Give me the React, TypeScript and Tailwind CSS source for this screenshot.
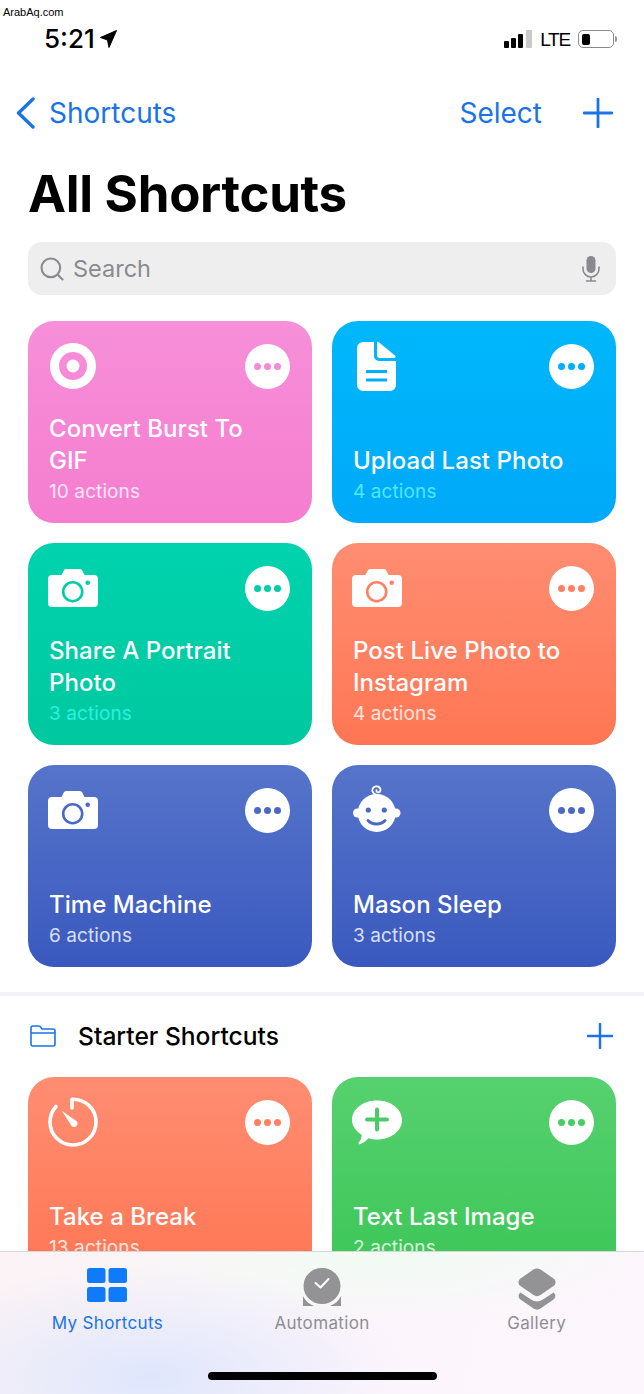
import { Search } from "lucide-react";
import { ReactNode } from "react";

function TargetIcon() {
  return (
    <svg width="50" height="50" viewBox="0 0 50 50" fill="none">
      <circle cx="25" cy="25" r="18.500" stroke="white" strokeWidth="9" />
      <circle cx="25" cy="25" r="6.500" fill="white" />
    </svg>
  );
}

function DocIcon({ accent }: { accent: string }) {
  return (
    <svg width="50" height="50" viewBox="0 0 50 50" fill="none">
      <path d="M11 1h11v14a5 5 0 0 0 5 5h17v24a6 6 0 0 1-6 6H11a6 6 0 0 1-6-6V7a6 6 0 0 1 6-6z" fill="white" />
      <path d="M25 0.500c0.500 0 1 0.200 1.500 0.600L43 14.500c1 0.900 0.500 2.500-0.800 2.500H28a3 3 0 0 1-3-3z" fill="white" />
      <path d="M14 30.500h21M14 39h21" stroke={accent} strokeWidth="3" />
    </svg>
  );
}

function CameraIcon({ accent }: { accent: string }) {
  return (
    <svg width="50" height="50" viewBox="0 0 50 50" fill="none">
      <path d="M4 12h9.500l2-4c.5-1.200 1.500-2 3-2h13c1.500 0 2.500.8 3 2l2 4H46a4 4 0 0 1 4 4v24a4 4 0 0 1-4 4H4a4 4 0 0 1-4-4V16a4 4 0 0 1 4-4z" fill="white" />
      <circle cx="24.700" cy="28.700" r="9.500" stroke={accent} strokeWidth="2.600" />
      <circle cx="39.700" cy="19.700" r="2.300" fill={accent} />
    </svg>
  );
}

function BabyIcon({ accent }: { accent: string }) {
  return (
    <svg width="50" height="50" viewBox="0 0 50 50" fill="none">
      <circle cx="24.700" cy="28" r="19" fill="white" />
      <circle cx="5.500" cy="28" r="4.500" fill="white" />
      <circle cx="44" cy="28" r="4.500" fill="white" />
      <path d="M25 10c-3.500-1-5.500-3.500-4.500-6 1-2.800 5-3.500 7-1.500 1.800 1.800 1 4.500-1 4.800-1.500.2-2.500-1-2-2.200" stroke="white" strokeWidth="1.800" strokeLinecap="round" />
      <circle cx="16.300" cy="25" r="2.600" fill={accent} />
      <circle cx="32.300" cy="25" r="2.600" fill={accent} />
      <path d="M16 35.500c4 4.500 13 4.500 17 0" stroke={accent} strokeWidth="3" strokeLinecap="round" />
    </svg>
  );
}

function TimerIcon() {
  return (
    <svg width="50" height="50" viewBox="0 0 50 50" fill="none">
      <path d="M24 11V2.200C37 1.800 48 11.500 48 25c0 12.700-10.300 23-23 23S2 37.700 2 25c0-6 2.300-11.400 6-15.500" stroke="white" strokeWidth="3.600" strokeLinecap="round" strokeLinejoin="round" />
      <path d="M13.500 13.500l13.800 9.800a3.500 3.500 0 1 1-4.500 4.500z" fill="white" />
    </svg>
  );
}

function MessagePlusIcon({ accent }: { accent: string }) {
  return (
    <svg width="50" height="50" viewBox="0 -2.500 50 50" fill="none" className="overflow-visible">
      <path d="M25 1c14 0 25 8.500 25 19.500S39 40 25 40c-3 0-6-.4-8.500-1.200C14 41.500 11 44 8 44.800c-1.500.3-2-.8-1.200-1.800 1.500-1.900 2.800-4.500 3-7.500C4.200 32 0 26.500 0 20.500 0 9.500 11 1 25 1z" fill="white" />
      <path d="M25 10v20M15 20h20" stroke={accent} strokeWidth="4" strokeLinecap="round" />
    </svg>
  );
}

function PlusIcon({ size, className }: { size: number; className?: string }) {
  return (
    <svg className={className} width={size} height={size} viewBox="0 0 30 30" fill="none" stroke="#1a73e8" strokeWidth="2.800" strokeLinecap="round">
      <path d="M15 1v28M1 15h28" />
    </svg>
  );
}

type Card = {
  title: string[];
  count: string;
  gradient: string;
  accent: string;
  countClass: string;
  icon: (accent: string) => ReactNode;
};

const PINK = "bg-gradient-to-b from-[#f78fd9] to-[#f57dcf]";
const BLUE = "bg-gradient-to-b from-[#00b7fb] to-[#00a9f9]";
const TEAL = "bg-gradient-to-b from-[#00d3ae] to-[#00c89f]";
const CORAL = "bg-gradient-to-b from-[#ff8d72] to-[#ff7653]";
const INDIGO = "bg-gradient-to-b from-[#5674ca] to-[#3a59bf]";
const GREEN = "bg-gradient-to-b from-[#56d16f] to-[#3bc657]";

const mainCards: Card[] = [
  { title: ["Convert Burst To", "GIF"], count: "10 actions", gradient: PINK, accent: "#f78ad7", countClass: "text-white/80", icon: () => <TargetIcon /> },
  { title: ["Upload Last Photo"], count: "4 actions", gradient: BLUE, accent: "#00aff9", countClass: "text-[#4fe8ff]", icon: (a) => <DocIcon accent={a} /> },
  { title: ["Share A Portrait", "Photo"], count: "3 actions", gradient: TEAL, accent: "#00cea6", countClass: "text-[#2cf0e0]", icon: (a) => <CameraIcon accent={a} /> },
  { title: ["Post Live Photo to", "Instagram"], count: "4 actions", gradient: CORAL, accent: "#ff8163", countClass: "text-white/80", icon: (a) => <CameraIcon accent={a} /> },
  { title: ["Time Machine"], count: "6 actions", gradient: INDIGO, accent: "#4a68c6", countClass: "text-white/80", icon: (a) => <CameraIcon accent={a} /> },
  { title: ["Mason Sleep"], count: "3 actions", gradient: INDIGO, accent: "#4a68c6", countClass: "text-white/80", icon: (a) => <BabyIcon accent={a} /> },
];

const starterCards: Card[] = [
  { title: ["Take a Break"], count: "13 actions", gradient: CORAL, accent: "#ff8163", countClass: "text-white/80", icon: () => <TimerIcon /> },
  { title: ["Text Last Image"], count: "2 actions", gradient: GREEN, accent: "#49cc63", countClass: "text-white/80", icon: (a) => <MessagePlusIcon accent={a} /> },
];

function ShortcutCard({ card }: { card: Card }) {
  return (
    <div className={`h-[202px] rounded-[26px] flex flex-col ${card.gradient}`}>
      <div className="flex items-center justify-between pt-5 pl-5 pr-[22px]">
        {card.icon(card.accent)}
        <div className="w-[45px] h-[45px] rounded-full bg-white flex items-center justify-center gap-[3px]">
          <span className="w-[7px] h-[7px] rounded-full" style={{ backgroundColor: card.accent }} />
          <span className="w-[7px] h-[7px] rounded-full" style={{ backgroundColor: card.accent }} />
          <span className="w-[7px] h-[7px] rounded-full" style={{ backgroundColor: card.accent }} />
        </div>
      </div>
      <div className="mt-auto pl-[21px] pb-[19px]">
        {card.title.map((line) => (
          <div key={line} className="text-[24px] leading-[32px] font-medium tracking-[0.05px] text-white">
            {line}
          </div>
        ))}
        <div className={`mt-[3px] text-[19px] leading-[24px] tracking-[0.1px] ${card.countClass}`}>{card.count}</div>
      </div>
    </div>
  );
}

function StatusBar() {
  return (
    <div className="h-[78px] flex items-center pl-11 pr-[27px] text-black">
      <span className="text-[26px] font-medium leading-none">5:21</span>
      <svg className="ml-[5px]" width="17" height="18" viewBox="0 0 17 18">
        <path d="M16.500 0.500L0.500 7.500l7 2.500 1.500 7.500z" fill="black" stroke="black" strokeWidth="1" strokeLinejoin="round" />
      </svg>
      <div className="ml-auto flex items-center">
        <svg width="28" height="18" viewBox="0 0 28 18">
          <rect x="0" y="11" width="5" height="7" rx="1" fill="black" />
          <rect x="7" y="8" width="5" height="10" rx="1" fill="black" />
          <rect x="14" y="4" width="5" height="14" rx="1" fill="black" />
          <rect x="22" y="0" width="6" height="18" rx="1" fill="#c9c9c9" />
        </svg>
        <span className="ml-[8px] text-[19px] leading-none tracking-[-1.200px] font-['Liberation_Sans',sans-serif]">LTE</span>
        <div className="ml-[8px] w-[36px] h-[18px] rounded-[5px] border border-[#8a8a8a] flex items-center pl-[3px]">
          <div className="w-[8px] h-[11px] rounded-[2px] bg-black" />
        </div>
        <div className="ml-[1px] w-[2px] h-[6px] rounded-r-full bg-[#9a9a9a]" />
      </div>
    </div>
  );
}

function TabBar() {
  return (
    <div className="absolute left-0 right-0 bottom-0 h-[143px] border-t border-[#d6d6d8] bg-[radial-gradient(ellipse_260px_110px_at_150px_125px,#dfe6fc_0%,rgba(240,240,253,0)_100%),radial-gradient(ellipse_300px_80px_at_380px_0px,#f1fbf3_0%,rgba(241,251,243,0)_100%),linear-gradient(100deg,#fbf3f5_0%,#fdf5fc_60%,#fdf6fd_100%)]">
      <div className="grid grid-cols-3 pt-4">
        <div className="flex flex-col items-center">
          <svg width="40" height="39" viewBox="0 0 40 39">
            <rect x="0" y="0" width="18.500" height="15" rx="2.500" fill="#0f7bfa" />
            <rect x="21.500" y="0" width="18.500" height="15" rx="2.500" fill="#0f7bfa" />
            <rect x="0" y="19" width="18.500" height="15" rx="2.500" fill="#0f7bfa" />
            <rect x="21.500" y="19" width="18.500" height="15" rx="2.500" fill="#0f7bfa" />
          </svg>
          <span className="mt-[6px] text-[17px] leading-5 tracking-[0.35px] text-[#1a73e8]">My Shortcuts</span>
        </div>
        <div className="flex flex-col items-center">
          <svg width="38" height="39" viewBox="0 0 38 39">
            <path d="M0 28v10h11C6 36 2.500 33 0 28zM38 28v10H27c5-2 8.500-5 11-10z" fill="#939295" />
            <ellipse cx="19" cy="18" rx="18.500" ry="18" fill="#939295" />
            <path d="M12.500 15l5 4.500L25.500 11" stroke="white" strokeWidth="2" fill="none" strokeLinecap="round" strokeLinejoin="round" />
          </svg>
          <span className="mt-[6px] text-[17px] leading-5 tracking-[0.35px] text-[#8f8e93]">Automation</span>
        </div>
        <div className="flex flex-col items-center">
          <svg className="-mb-[3px]" width="38" height="42" viewBox="0 0 38 42">
            <path d="M2.500 24.500L13 31.500c4 2.500 8 2.500 12 0l10.500-7c2.500 2 2.500 5 0 7L22.500 40.500c-2.200 1.500-4.800 1.500-7 0L2.500 31.500c-2.500-2-2.500-5 0-7z" fill="#939295" />
            <path d="M15.500 1.500c2.200-1.500 4.800-1.500 7 0L35.500 10.500c2.700 2 2.700 5.500 0 7.500L22.500 27c-2.200 1.500-4.800 1.500-7 0L2.500 18c-2.700-2-2.700-5.500 0-7.500z" fill="#939295" />
          </svg>
          <span className="mt-[6px] text-[17px] leading-5 tracking-[0.35px] text-[#8f8e93]">Gallery</span>
        </div>
      </div>
      <div className="absolute left-[208px] bottom-[14px] w-[229px] h-2 rounded-full bg-black" />
    </div>
  );
}

export default function App() {
  return (
    <div className="relative w-[644px] h-[1394px] overflow-hidden bg-white font-['Inter',sans-serif]">
      <span className="absolute left-[3px] top-[4px] text-[11px] leading-4 text-black font-['Liberation_Sans',sans-serif]">ArabAq.com</span>
      <StatusBar />

      <div className="h-[70px] flex items-center text-[#1a73e8]">
        <svg className="ml-[16px]" width="19" height="32" viewBox="0 0 19 32" fill="none" stroke="#1a73e8" strokeWidth="3.400" strokeLinecap="round" strokeLinejoin="round">
          <path d="M17 2L2.500 16 17 30" />
        </svg>
        <span className="ml-[14px] text-[28px] leading-none">Shortcuts</span>
        <span className="ml-auto text-[28px] leading-none">Select</span>
        <PlusIcon className="ml-[41px] mr-[31px]" size={30} />
      </div>

      <h1 className="h-[92px] pl-7 text-[51px] leading-[92px] font-bold tracking-[-0.3px] text-black">All Shortcuts</h1>

      <div className="mt-[2px] mx-7 h-[53px] rounded-[14px] bg-[#eeeeef] flex items-center pl-[10px] pr-[16px] text-[#8a8a8e]">
        <Search size={28} strokeWidth={1.800} />
        <span className="ml-[7px] text-[23.500px] leading-none">Search</span>
        <svg className="ml-auto" width="18" height="26" viewBox="0 0 18 26" fill="none">
          <rect x="4.500" y="0" width="9" height="17" rx="4.500" fill="#8a8a8e" />
          <path d="M1 11v2a8 8 0 0 0 16 0v-2M9 21v4M4.500 25h9" stroke="#8a8a8e" strokeWidth="1.600" strokeLinecap="round" />
        </svg>
      </div>

      <div className="mt-[26px] mx-7 grid grid-cols-2 gap-5">
        {mainCards.map((card) => (
          <ShortcutCard key={card.title[0]} card={card} />
        ))}
      </div>

      <div className="mt-[25px] h-1 bg-[#f2f2f6]" />

      <div className="h-[80px] flex items-center pl-[30px] pr-[31px]">
        <svg width="26" height="22" viewBox="0 0 26 22" fill="none" stroke="#1a73e8" strokeWidth="1.600">
          <path d="M1 19V3a2 2 0 0 1 2-2h5.500c1.200 0 1.800.5 2.500 1.500L12 4h11a2 2 0 0 1 2 2v13a2 2 0 0 1-2 2H3a2 2 0 0 1-2-2zM1 8h24" />
        </svg>
        <span className="ml-[22px] text-[24.600px] leading-none font-medium text-black">Starter Shortcuts</span>
        <PlusIcon className="ml-auto" size={26} />
      </div>

      <div className="mt-px mx-7 grid grid-cols-2 gap-5">
        {starterCards.map((card) => (
          <ShortcutCard key={card.title[0]} card={card} />
        ))}
      </div>

      <TabBar />
    </div>
  );
}
